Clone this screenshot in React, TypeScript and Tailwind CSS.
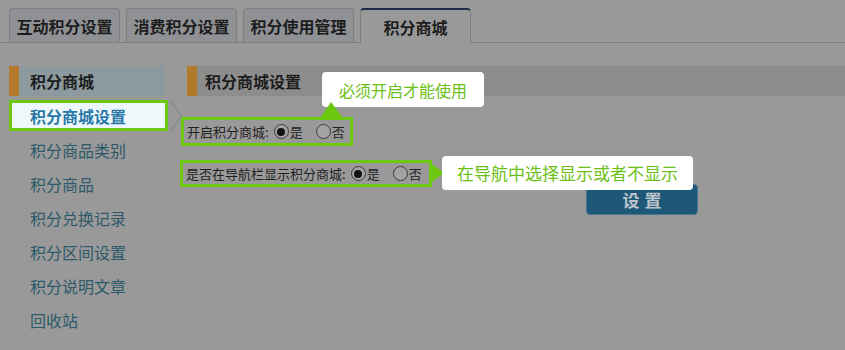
import React from "react"

const tabs = ["互动积分设置", "消费积分设置", "积分使用管理", "积分商城"]
const menu = ["积分商品类别", "积分商品", "积分兑换记录", "积分区间设置", "积分说明文章", "回收站"]

const Radio = ({ checked }: { checked?: boolean }) => (
  <span className="inline-flex w-[15px] h-[15px] rounded-full border border-[#3a3a3a] bg-[#a3a3a3] items-center justify-center mr-[1px]">
    {checked && <span className="w-[8px] h-[8px] rounded-full bg-[#111]" />}
  </span>
)

export default function App() {
  return (
    <div
      className="relative w-[845px] h-[350px] overflow-hidden bg-[#999999]"
      style={{ fontFamily: '"Noto Sans CJK SC", "Noto Sans", sans-serif' }}
    >
      {/* tabs */}
      <div className="flex items-end gap-[6px] pl-[9px] pt-[8px] h-[43px] border-b border-[#7d7f82]">
        {tabs.map((t, i) =>
          i === 3 ? (
            <div
              key={t}
              className="w-[111px] h-[35px] -mb-px rounded-t-[4px] border border-[#7d7f82] border-t-2 border-t-[#1e2a48] border-b-0 bg-[#999999] flex items-center justify-center text-[16px] font-bold text-[#1d1d1d]"
            >
              {t}
            </div>
          ) : (
            <div
              key={t}
              className="w-[111px] h-[34px] rounded-t-[4px] border border-[#7d7f82] border-b-0 bg-[#8f9194] flex items-center justify-center text-[16px] font-bold text-[#1d1d1d]"
            >
              {t}
            </div>
          )
        )}
      </div>

      <div className="flex mt-[23px]">
        {/* sidebar */}
        <div className="w-[156px] ml-[9px] shrink-0">
          <div className="h-[30px] bg-[#8c9aa0] border-l-[10px] border-[#b47a2c] flex items-center pl-[11px] text-[16px] font-bold text-[#1d1d1d]">
            积分商城
          </div>
          <div className="relative mt-[4px] h-[31px] w-[159px] bg-[#eef8fb] border-[3px] border-[#6cc80e] flex items-center pl-[18px] text-[16px] font-bold text-[#2a78a8]">
            积分商城设置
          </div>
          <div className="mt-[2px]">
            {menu.map((m) => (
              <div key={m} className="h-[34px] flex items-center pl-[21px] text-[16px] text-[#2d5a6a]">
                {m}
              </div>
            ))}
          </div>
        </div>

        {/* content */}
        <div className="flex-1 ml-[22px]">
          <div className="h-[30px] bg-[#8d8d8d] border-l-[10px] border-[#b47a2c] flex items-center pl-[8px] text-[16px] font-bold text-[#1d1d1d]">
            积分商城设置
          </div>

          <div className="mt-[21px] -ml-[6px] w-[172px] h-[29px] border-[3px] border-[#6cc80e] flex items-center pl-[3px] text-[13px] text-[#1f1f1f]">
            <span>开启积分商城:</span>
            <span className="ml-[5px] inline-flex items-center"><Radio checked />是</span>
            <span className="ml-[13px] inline-flex items-center"><Radio />否</span>
          </div>

          <div className="mt-[14px] -ml-[7px] w-[252px] h-[27px] border-[3px] border-[#6cc80e] flex items-center pl-[3px] text-[13px] text-[#1f1f1f]">
            <span>是否在导航栏显示积分商城:</span>
            <span className="ml-[5px] inline-flex items-center"><Radio checked />是</span>
            <span className="ml-[13px] inline-flex items-center"><Radio />否</span>
          </div>

          <button className="-mt-[3px] ml-[399px] w-[112px] h-[31px] rounded-[4px] bg-[#1e5878] border border-[#4a7892] text-[17px] font-bold tracking-[5px] pl-[5px] text-[#bcc4ca] flex items-center justify-center">
            设置
          </button>
        </div>
      </div>

      {/* chevron beside selected item */}
      <svg className="absolute left-[166px] top-[99px]" width="18" height="34" viewBox="0 0 18 34">
        <path d="M4 1 L15 17 L4 33" fill="none" stroke="#7a8592" strokeWidth="1" />
      </svg>

      {/* tooltip 1 */}
      <div className="absolute left-[322px] top-[72px] w-[162px] h-[35px] bg-white rounded-[4px] flex items-center justify-center text-[16px] text-[#6cbf17]">
        必须开启才能使用
      </div>
      <svg className="absolute left-[320px] top-[102px]" width="24" height="16" viewBox="0 0 24 16">
        <path d="M11 0 L23 16 L0 16 Z" fill="#6cc80e" />
      </svg>

      {/* tooltip 2 */}
      <svg className="absolute left-[432px] top-[164px]" width="12" height="18" viewBox="0 0 12 18">
        <path d="M0 0 L12 9 L0 18 Z" fill="#6cc80e" />
      </svg>
      <div className="absolute left-[442px] top-[156px] w-[251px] h-[34px] bg-white rounded-[4px] flex items-center justify-center text-[17px] text-[#6cbf17]">
        在导航中选择显示或者不显示
      </div>
    </div>
  )
}
